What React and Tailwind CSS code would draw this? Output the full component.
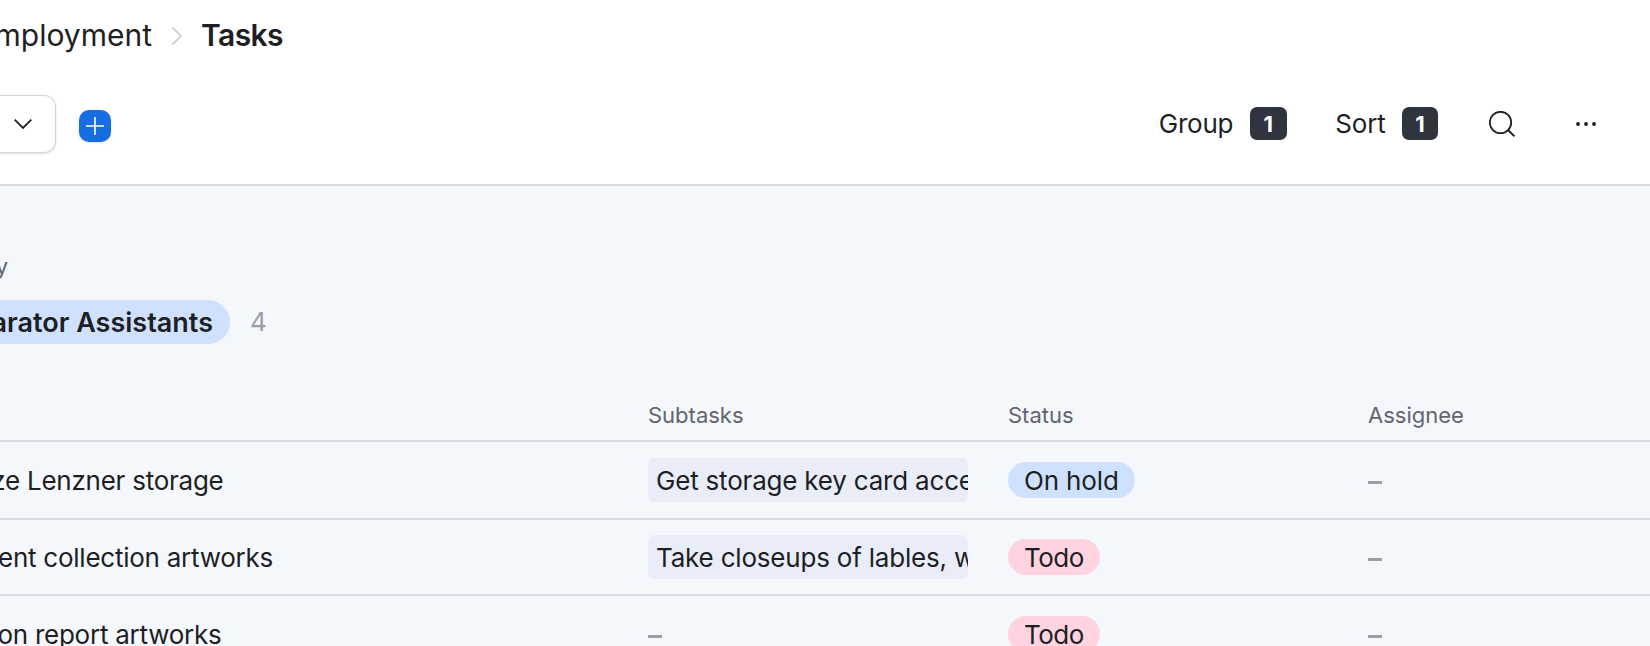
import React from "react";

const columns = ["Subtasks", "Status", "Assignee"];

const tasks = [
  {
    name: "ze Lenzner storage",
    end: "w-[223.5px]",
    subtask: "Get storage key card access",
    status: "On hold",
    height: "h-[78px]",
  },
  {
    name: "ent collection artworks",
    end: "w-[273px]",
    subtask: "Take closeups of lables, with",
    status: "Todo",
    height: "h-[76px]",
  },
  {
    name: "on report artworks",
    end: "w-[221.5px]",
    subtask: null,
    status: "Todo",
    height: "h-[78px]",
  },
];

const Dash = () => <div className="mt-[5px] h-[3px] w-3.5 bg-[#9b9ea5]" />;

const CountButton = ({ label, count, badge }) => (
  <button className="flex items-center gap-[16.5px]">
    <span className="text-[26px] leading-8 tracking-[-0.2px]">{label}</span>
    <span
      className={`mb-px flex h-[33px] items-center justify-center rounded-[7px] bg-[#2f343e] text-[22px] font-bold leading-none text-white ${badge}`}
    >
      {count}
    </span>
  </button>
);

const StatusPill = ({ status }) => (
  <span
    className={`flex h-9 items-center rounded-full px-4 pt-0.5 text-[26px] leading-none ${
      status === "Todo" ? "bg-[#ffd3e0] tracking-[-0.5px]" : "bg-[#d0e1fd] tracking-[-0.15px]"
    }`}
  >
    {status}
  </span>
);

const App = () => {
  return (
    <div className="h-[646px] w-[1650px] overflow-hidden bg-[#f4f7fc] font-['Inter',sans-serif] text-[#1d1f25]">
      {/* Top bar */}
      <header className="h-[186px] border-b-2 border-[#d9dde1] bg-white">
        <nav className="flex h-[70px] items-center text-[30px] leading-none">
          <div className="flex w-[152px] shrink-0 justify-end whitespace-nowrap">mployment</div>
          <svg className="ml-5 mt-0.5 h-5 w-3 shrink-0" viewBox="0 0 12 20" fill="none" stroke="#c9cbcf" strokeWidth="1.6">
            <path d="M.5 1.5 9 10l-8.500 8.500" />
          </svg>
          <span className="ml-[17px] font-semibold tracking-[-0.6px]">Tasks</span>
        </nav>

        <div className="flex items-center pt-[25px]">
          <button className="flex h-[58px] w-14 items-center rounded-r-xl border border-l-0 border-[#d2d3d6] bg-white pl-3.5 shadow-sm">
            <svg className="h-3 w-[18px]" viewBox="0 0 18 12" fill="none" stroke="#1d1f25" strokeWidth="1.8">
              <path d="M.7 1.700 9 9.900l8.300-8.200" />
            </svg>
          </button>
          <button className="ml-[23px] mt-1 flex size-8 items-center justify-center rounded-[10px] bg-[#176ee2] shadow-sm">
            <svg className="size-[18px]" viewBox="0 0 18 18" stroke="#fff" strokeWidth="1.6">
              <path d="M9 0v18M0 9h18" />
            </svg>
          </button>

          <div className="ml-auto flex items-center pr-[54px]">
            <CountButton label="Group" count={1} badge="w-[37px]" />
            <div className="w-[48.5px]" />
            <CountButton label="Sort" count={1} badge="w-9" />
            <button className="ml-[51px]">
              <svg className="size-[26px]" viewBox="0 0 26 26" fill="none" stroke="#1d1f25" strokeWidth="1.8">
                <circle cx="11.500" cy="11.500" r="10.700" />
                <path d="m19 19 6.500 6.300" />
              </svg>
            </button>
            <button className="ml-[61px]">
              <svg className="h-1 w-5" viewBox="0 0 20 4" fill="#1d1f25">
                <circle cx="2" cy="2" r="1.9" />
                <circle cx="10" cy="2" r="1.9" />
                <circle cx="18" cy="2" r="1.9" />
              </svg>
            </button>
          </div>
        </div>
      </header>

      {/* Group heading */}
      <section className="h-[204px] pt-16">
        <div className="flex h-8 w-2 items-center justify-end text-[22px] text-[#62656e]">y</div>
        <div className="mt-[18px] flex items-center">
          <div className="flex h-11 w-[230px] items-center justify-end whitespace-nowrap rounded-r-full bg-[#d0e1fd] pr-[17px] text-[27px] font-semibold leading-none">
            arator Assistants
          </div>
          <span className="ml-5 text-[26px] leading-none text-[#9b9ea5]">4</span>
        </div>
      </section>

      {/* Column titles */}
      <div className="flex h-[52px] border-b-2 border-[#d9dce2] pl-[648px] pt-[11px] text-[22px] leading-7 text-[#62656e]">
        {columns.map((column) => (
          <div key={column} className="w-[360px] shrink-0">
            {column}
          </div>
        ))}
      </div>

      {tasks.map((task) => (
        <div
          key={task.name}
          className={`flex items-center border-b-2 border-[#d9dce2] text-[26px] leading-none ${task.height}`}
        >
          <div className="w-[648px] shrink-0">
            <div className={`flex justify-end whitespace-nowrap pt-0.5 tracking-[-0.25px] ${task.end}`}>
              {task.name}
            </div>
          </div>
          <div className="w-[360px] shrink-0">
            {task.subtask ? (
              <div className="flex h-11 w-80 items-center overflow-hidden whitespace-nowrap rounded-md bg-[#e9edf8] pl-2 pt-0.5 tracking-[-0.2px]">
                {task.subtask}
              </div>
            ) : (
              <Dash />
            )}
          </div>
          <div className="flex w-[360px] shrink-0">
            <StatusPill status={task.status} />
          </div>
          <Dash />
        </div>
      ))}
    </div>
  );
};

export default App;
